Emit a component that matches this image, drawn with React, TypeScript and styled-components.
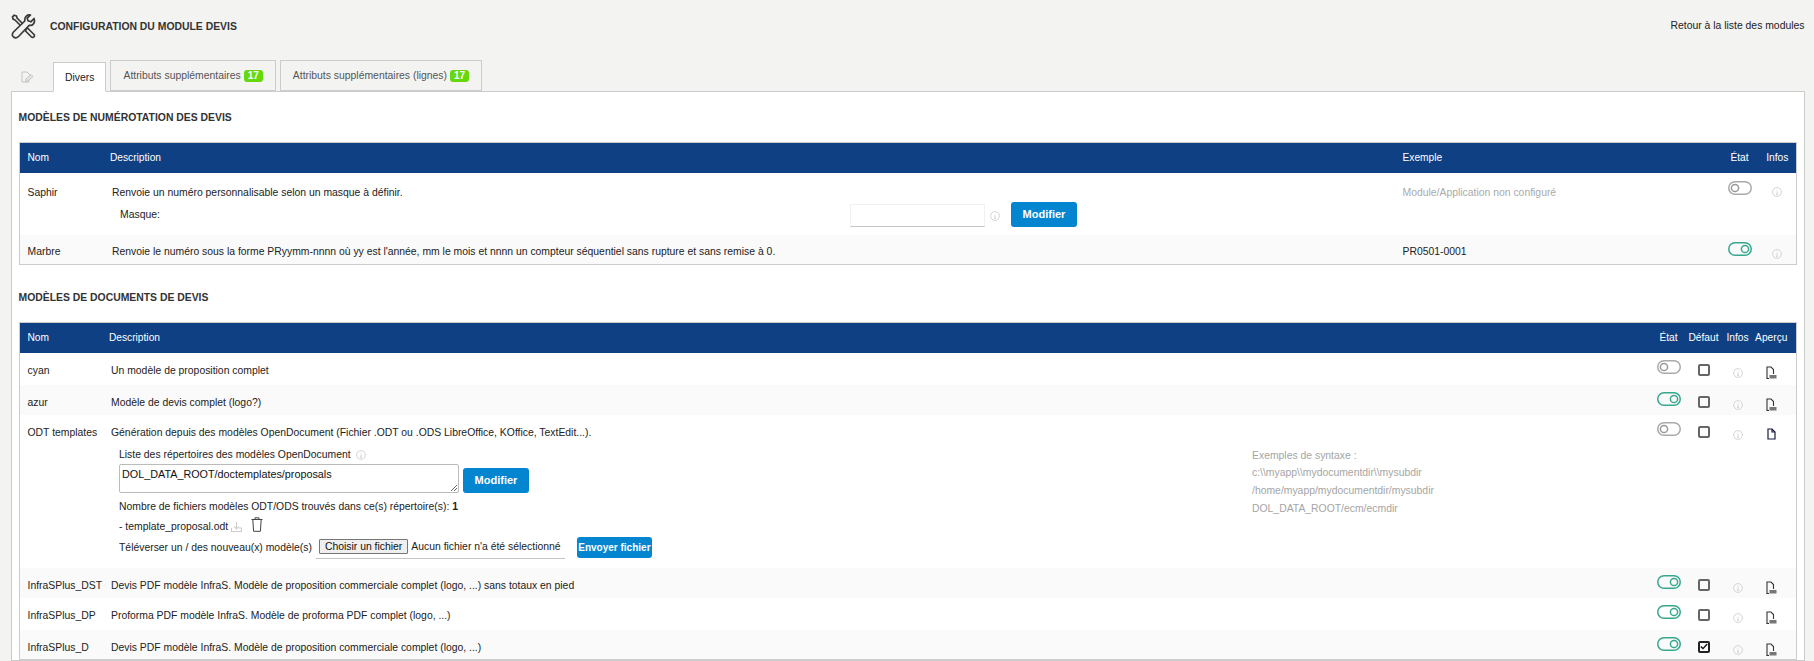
import React from 'react'
import styled, { createGlobalStyle } from 'styled-components'

const GlobalStyle = createGlobalStyle`
	html, body { margin: 0; padding: 0; background: #f3f3f2; }
	body { font-family: "Liberation Sans", Arial, sans-serif; font-size: 10.4px; color: #222; }
`

const Page = styled.div`
	width: 1814px;
	height: 661px;
	overflow: hidden;
	padding: 0 9.5px 0 11px;
	box-sizing: border-box;
`

const PageHead = styled.div`
	height: 60px;
	display: flex;
	align-items: flex-start;
	justify-content: space-between;
	padding-top: 14px;
	box-sizing: border-box;
`

const TitleWrap = styled.div`
	display: flex;
	align-items: center;
	gap: 14px;
`

const PageTitle = styled.div`
	font-weight: 700;
	color: #333;
`

const BackLink = styled.div`
	margin-top: 6px;
	color: #222;
`

const TabBar = styled.div`
	display: flex;
	align-items: flex-end;
	height: 31px;
	padding-left: 10px;
	gap: 4px;
`

const TabIcon = styled.div`
	width: 14px;
	height: 28px;
	margin-right: 14px;
	display: flex;
	align-items: center;
`

const Tab = styled.div<{ $active?: boolean }>`
	height: ${p => (p.$active ? 30 : 31)}px;
	box-sizing: border-box;
	padding: 0 ${p => (p.$active ? 11 : 12)}px;
	display: flex;
	align-items: center;
	gap: 3px;
	color: ${p => (p.$active ? '#222' : '#555')};
	background: ${p => (p.$active ? '#fff' : '#f3f3f2')};
	border: 1px solid #ccc;
	border-bottom: ${p => (p.$active ? '1px solid #fff' : '1px solid #ccc')};
	margin-bottom: ${p => (p.$active ? '-1px' : '0')};
	position: relative;
	z-index: 1;
`

const Badge = styled.span`
	background: #66d80e;
	color: #fff;
	font-weight: 700;
	font-size: 10px;
	border-radius: 3px;
	padding: 0 4px;
	height: 12px;
	line-height: 12px;
`

const Panel = styled.div`
	background: #fff;
	border: 1px solid #ccc;
	padding: 0 6.5px;
	height: 570px;
	box-sizing: border-box;
`

const SectionTitle = styled.div<{ $height: number; $top?: number }>`
	height: ${p => p.$height}px;
	padding-top: ${p => p.$top ?? 0}px;
	box-sizing: border-box;
	display: flex;
	align-items: center;
	font-weight: 700;
	color: #333;
`

const Table = styled.table`
	width: 100%;
	table-layout: fixed;
	border-collapse: collapse;
	border: 1px solid #ccc;
`

const HeadRow = styled.tr`
	background: #0e4083;
	height: 30px;
`

const HeadCell = styled.th<{ $center?: boolean; $right?: number }>`
	font-weight: 400;
	font-size: 10.2px;
	color: #fff;
	text-align: ${p => (p.$center ? 'center' : 'left')};
	padding: 0 ${p => p.$right ?? 0}px 0 ${p => (p.$center ? 0 : 8)}px;
	white-space: nowrap;
`

const Row = styled.tr<{ $odd?: boolean; $height: number }>`
	background: ${p => (p.$odd ? '#fafafa' : '#fff')};
	height: ${p => p.$height}px;
`

const Cell = styled.td<{ $top?: number; $muted?: boolean }>`
	padding: ${p => p.$top ?? 12}px 0 0 8px;
	vertical-align: top;
	text-align: left;
	color: ${p => (p.$muted ? '#aaa' : '#222')};
	white-space: nowrap;
`

const IconCell = styled.td<{ $top: number; $right?: number }>`
	padding: ${p => p.$top}px ${p => p.$right ?? 0}px 0 0;
	vertical-align: top;
	text-align: center;
	line-height: 0;
`

const DescText = styled.div`
	padding-left: 2px;
`

const MaskRow = styled.div`
	display: flex;
	align-items: flex-end;
	height: 29px;
	padding-left: 10px;
`

const MaskLabel = styled.span`
	width: 730px;
	align-self: center;
	margin-top: 5px;
`

const MaskInput = styled.div`
	width: 135px;
	height: 23px;
	box-sizing: border-box;
	border: 1px solid #f0f0f0;
	border-bottom: 1px solid #c4c4c4;
`

const InfoWrap = styled.span`
	display: inline-flex;
	margin-left: 5px;
	align-self: center;
`

const MaskInfo = styled(InfoWrap)`
	align-self: flex-end;
	margin-bottom: 6px;
`

const ActionButton = styled.div<{ $small?: boolean }>`
	display: inline-flex;
	align-items: center;
	justify-content: center;
	flex: none;
	background: #0386cf;
	color: #fff;
	font-weight: 700;
	border-radius: 3px;
	font-size: ${p => (p.$small ? 10 : 11)}px;
	width: ${p => (p.$small ? 75 : 66)}px;
	height: ${p => (p.$small ? 21 : 25)}px;
`

const OdtLayout = styled.div`
	display: flex;
	padding-left: 2px;
`

const OdtMain = styled.div`
	width: 1141px;
	padding: 10px 0 0 8px;
	box-sizing: border-box;
`

const OdtLine = styled.div<{ $height: number; $end?: boolean }>`
	display: flex;
	align-items: ${p => (p.$end ? 'flex-end' : 'center')};
	height: ${p => p.$height}px;
`

const PathBox = styled.div`
	width: 340px;
	height: 29px;
	box-sizing: border-box;
	border: 1px solid #bbb;
	border-radius: 2px;
	padding: 3px 2px;
	font-size: 10.8px;
	color: #111;
	margin-right: 4px;
	position: relative;
`

const Resize = styled.span`
	position: absolute;
	right: 1px;
	bottom: 1px;
	line-height: 0;
`

const FilePicker = styled.div`
	display: flex;
	align-items: center;
	flex: none;
	margin: 0 12px 0 4px;
	height: 24px;
	width: 249px;
	padding-left: 3px;
	box-sizing: border-box;
	border-bottom: 1px solid #c4c4c4;
	white-space: nowrap;
`

const FileButton = styled.span`
	background: #efefef;
	border: 1px solid #767676;
	padding: 0 5px;
	height: 13px;
	line-height: 13px;
	margin-right: 3px;
	border-radius: 1px;
	color: #111;
`

const Syntax = styled.div`
	color: #a5a5a5;
	padding-top: 9px;
	line-height: 17.8px;
`

const Spacer = styled.span<{ $w: number }>`
	display: inline-block;
	width: ${p => p.$w}px;
`

const TrashWrap = styled.span`
	display: inline-flex;
	margin-top: -3px;
`

const ToolsIcon = () => (
	<svg width="25" height="25" viewBox="0 0 25 25" fill="none" stroke="#3a3a3a" strokeWidth="1.7" strokeLinejoin="round" strokeLinecap="round">
		<path d="M2 5 L1.5 2.8 L3.2 1.2 L5.5 2 L6 4 L8 6 L16.5 14.5 L14.5 16.5 L6 8 L4 6 Z" />
		<path d="M15 15.5 L16.5 14 L23 20.5 C23.6 21.2 23.6 22 23 22.8 C22.3 23.6 21.2 23.7 20.5 23 L14.5 17 Z" fill="#f3f3f2" />
		<path d="M23 4.5 L19.8 7.8 L17 6.8 L16.2 4.2 L19.5 1 C16.5 0.5 13.2 2.5 13.8 7 L2.5 18 C1 19.8 1.2 21.8 2.5 23 C4 24.2 6 24 7.5 22.5 L18.2 11.4 C22 12 24.5 8.5 23 4.5 Z" fill="#f3f3f2" />
	</svg>
)

const BackIcon = () => (
	<svg width="13" height="12" viewBox="0 0 13 12" fill="none" stroke="#c4c4c4" strokeWidth="1">
		<path d="M1 1 H6 L8.5 3.5 V5 M1 1 V11 H8 V9.5" />
		<path d="M5 8 L10 3.5 L12 5.5 L7 10 L4.5 10.5 Z" fill="#e4e4e4" />
	</svg>
)

const InfoIcon = () => (
	<svg width="10" height="10" viewBox="0 0 10 10" fill="none" stroke="#d4d4d4">
		<circle cx="5" cy="5" r="4.4" />
		<path d="M5 4.4 V7.4 M4 7.4 H6 M5 2.6 V3.4" />
	</svg>
)

const PdfIcon = () => (
	<svg width="11" height="13" viewBox="0 0 11 13" fill="none">
		<path d="M1 12.5 V1 H5 L7.5 3.5 V8" stroke="#333" strokeWidth="1.1" />
		<path d="M0.5 12.5 H3" stroke="#333" strokeWidth="1.1" />
		<rect x="3.5" y="9" width="7" height="3.5" fill="#777" />
	</svg>
)

const OdtIcon = () => (
	<svg width="9" height="12" viewBox="0 0 9 12" fill="none" stroke="#1a1a40" strokeWidth="1.2">
		<path d="M1 1 H5 L8 4 V11 H1 Z" />
		<path d="M5 1 V4 H8" />
	</svg>
)

const DownloadIcon = () => (
	<svg width="11" height="11" viewBox="0 0 11 11" fill="none" stroke="#ccc" strokeWidth="1.1">
		<path d="M0.5 7 V10.5 H10.5 V7 H8" />
		<path d="M5.5 1 V7.5 M3.2 5.4 L5.5 8 L7.8 5.4" />
	</svg>
)

const TrashIcon = () => (
	<svg width="12" height="15" viewBox="0 0 12 15" fill="none" stroke="#444" strokeWidth="1">
		<path d="M0.5 2.5 H11.5 M4 2.5 V0.8 H8 V2.5 M1.8 2.5 L2.6 14.3 H9.4 L10.2 2.5" />
	</svg>
)

const TickIcon = () => (
	<svg width="8" height="7" viewBox="0 0 8 7" fill="none" stroke="#111" strokeWidth="1.4">
		<path d="M0.8 3.5 L3 5.6 L7.2 1" />
	</svg>
)

const Switch: React.FC<{ on?: boolean }> = ({ on }) => {
	const colour = on ? '#36a88e' : '#aaa'
	return (
		<svg width="24" height="14" viewBox="0 0 24 14" fill="none" strokeWidth="1.5">
			<rect x="0.75" y="0.75" width="22.5" height="12.5" rx="6.25" stroke={colour} />
			<circle cx={on ? 17 : 7} cy="7" r="3.6" stroke={on ? colour : '#999'} />
		</svg>
	)
}

const Check = styled.span<{ $checked?: boolean }>`
	display: inline-flex;
	align-items: center;
	justify-content: center;
	width: 12px;
	height: 12px;
	box-sizing: border-box;
	border: 2px solid ${p => (p.$checked ? '#222' : '#666')};
	border-radius: 2px;
`

const numberingRows = [
	{ name: 'Marbre', desc: "Renvoie le numéro sous la forme PRyymm-nnnn où yy est l'année, mm le mois et nnnn un compteur séquentiel sans rupture et sans remise à 0.", example: 'PR0501-0001' },
]

const simpleDocs = [
	{ name: 'InfraSPlus_DST', desc: 'Devis PDF modèle InfraS. Modèle de proposition commerciale complet (logo, ...) sans totaux en pied', on: true, height: 30, odd: true },
	{ name: 'InfraSPlus_DP', desc: 'Proforma PDF modèle InfraS. Modèle de proforma PDF complet (logo, ...)', on: true, height: 32, odd: false },
	{ name: 'InfraSPlus_D', desc: 'Devis PDF modèle InfraS. Modèle de proposition commerciale complet (logo, ...)', on: true, height: 30, odd: true, checked: true },
]

const DocIcons: React.FC<{ on?: boolean; checked?: boolean; odt?: boolean }> = ({ on, checked, odt }) => (
	<>
		<IconCell $top={7}><Switch on={on} /></IconCell>
		<IconCell $top={11}><Check $checked={checked}>{checked && <TickIcon />}</Check></IconCell>
		<IconCell $top={15}><InfoIcon /></IconCell>
		<IconCell $top={13} $right={8}>{odt ? <OdtIcon /> : <PdfIcon />}</IconCell>
	</>
)

export default function App() {
	return (
		<Page>
			<GlobalStyle />
			<PageHead>
				<TitleWrap>
					<ToolsIcon />
					<PageTitle>CONFIGURATION DU MODULE DEVIS</PageTitle>
				</TitleWrap>
				<BackLink>Retour à la liste des modules</BackLink>
			</PageHead>
			<TabBar>
				<TabIcon><BackIcon /></TabIcon>
				<Tab $active>Divers</Tab>
				<Tab>Attributs supplémentaires <Badge>17</Badge></Tab>
				<Tab>Attributs supplémentaires (lignes) <Badge>17</Badge></Tab>
			</TabBar>
			<Panel>
				<SectionTitle $height={50}>MODÈLES DE NUMÉROTATION DES DEVIS</SectionTitle>
				<Table>
					<colgroup>
						<col style={{ width: 83 }} />
						<col />
						<col style={{ width: 326 }} />
						<col style={{ width: 38 }} />
						<col style={{ width: 38 }} />
					</colgroup>
					<thead>
						<HeadRow>
							<HeadCell>Nom</HeadCell>
							<HeadCell>Description</HeadCell>
							<HeadCell>Exemple</HeadCell>
							<HeadCell $center>État</HeadCell>
							<HeadCell $center>Infos</HeadCell>
						</HeadRow>
					</thead>
					<tbody>
						<Row $height={62}>
							<Cell $top={14}>Saphir</Cell>
							<Cell $top={14}>
								<DescText>Renvoie un numéro personnalisable selon un masque à définir.</DescText>
								<MaskRow>
									<MaskLabel>Masque:</MaskLabel>
									<MaskInput />
									<MaskInfo><InfoIcon /></MaskInfo>
									<Spacer $w={11} />
									<ActionButton>Modifier</ActionButton>
								</MaskRow>
							</Cell>
							<Cell $top={14} $muted>Module/Application non configuré</Cell>
							<IconCell $top={8}><Switch /></IconCell>
							<IconCell $top={14}><InfoIcon /></IconCell>
						</Row>
						{numberingRows.map(row => (
							<Row key={row.name} $odd $height={30}>
								<Cell $top={11}>{row.name}</Cell>
								<Cell $top={11}><DescText>{row.desc}</DescText></Cell>
								<Cell $top={11}>{row.example}</Cell>
								<IconCell $top={7}><Switch on /></IconCell>
								<IconCell $top={14}><InfoIcon /></IconCell>
							</Row>
						))}
					</tbody>
				</Table>
				<SectionTitle $height={57} $top={8}>MODÈLES DE DOCUMENTS DE DEVIS</SectionTitle>
				<Table>
					<colgroup>
						<col style={{ width: 82 }} />
						<col />
						<col style={{ width: 36 }} />
						<col style={{ width: 34 }} />
						<col style={{ width: 34 }} />
						<col style={{ width: 42 }} />
					</colgroup>
					<thead>
						<HeadRow>
							<HeadCell>Nom</HeadCell>
							<HeadCell>Description</HeadCell>
							<HeadCell $center>État</HeadCell>
							<HeadCell $center>Défaut</HeadCell>
							<HeadCell $center>Infos</HeadCell>
							<HeadCell $center $right={8}>Aperçu</HeadCell>
						</HeadRow>
					</thead>
					<tbody>
						<Row $height={32}>
							<Cell>cyan</Cell>
							<Cell><DescText>Un modèle de proposition complet</DescText></Cell>
							<DocIcons />
						</Row>
						<Row $odd $height={30}>
							<Cell>azur</Cell>
							<Cell><DescText>Modèle de devis complet (logo?)</DescText></Cell>
							<DocIcons on />
						</Row>
						<Row $height={153}>
							<Cell>ODT templates</Cell>
							<Cell>
								<DescText>Génération depuis des modèles OpenDocument (Fichier .ODT ou .ODS LibreOffice, KOffice, TextEdit...).</DescText>
								<OdtLayout>
									<OdtMain>
										<OdtLine $height={14}>Liste des répertoires des modèles OpenDocument<InfoWrap><InfoIcon /></InfoWrap></OdtLine>
										<OdtLine $height={31} $end>
											<PathBox>
												DOL_DATA_ROOT/doctemplates/proposals
												<Resize>
													<svg width="7" height="7" viewBox="0 0 7 7" stroke="#666"><path d="M1 7 L7 1 M4 7 L7 4" /></svg>
												</Resize>
											</PathBox>
											<ActionButton>Modifier</ActionButton>
										</OdtLine>
										<OdtLine $height={27}>Nombre de fichiers modèles ODT/ODS trouvés dans ce(s) répertoire(s):&nbsp;<b>1</b></OdtLine>
										<OdtLine $height={13}>- template_proposal.odt&nbsp;<DownloadIcon /><Spacer $w={9} /><TrashWrap><TrashIcon /></TrashWrap></OdtLine>
										<OdtLine $height={29}>
											Téléverser un / des nouveau(x) modèle(s)
											<FilePicker><FileButton>Choisir un fichier</FileButton>Aucun fichier n'a été sélectionné</FilePicker>
											<ActionButton $small>Envoyer fichier</ActionButton>
										</OdtLine>
									</OdtMain>
									<Syntax>
										Exemples de syntaxe :<br />
										c:\\myapp\\mydocumentdir\\mysubdir<br />
										/home/myapp/mydocumentdir/mysubdir<br />
										DOL_DATA_ROOT/ecm/ecmdir
									</Syntax>
								</OdtLayout>
							</Cell>
							<DocIcons odt />
						</Row>
						{simpleDocs.map(doc => (
							<Row key={doc.name} $odd={doc.odd} $height={doc.height}>
								<Cell>{doc.name}</Cell>
								<Cell><DescText>{doc.desc}</DescText></Cell>
								<DocIcons on={doc.on} checked={doc.checked} />
							</Row>
						))}
					</tbody>
				</Table>
			</Panel>
		</Page>
	)
}
